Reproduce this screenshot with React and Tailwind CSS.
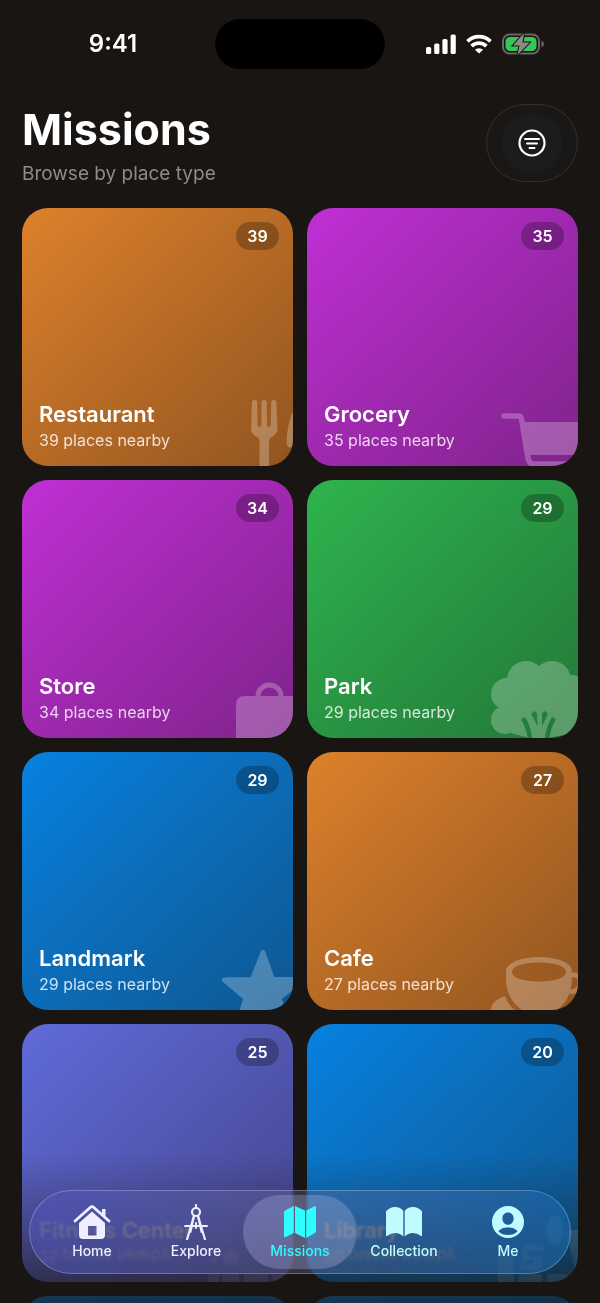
import clsx from 'clsx';

const THEMES = {
  orange: 'from-[#dd812b] to-[#925520]',
  purple: 'from-[#c02fd5] to-[#7f238b]',
  green: 'from-[#2eb44e] to-[#237838]',
  blue: 'from-[#0681e0] to-[#0e5790]',
  indigo: 'from-[#606bda] to-[#43448a]',
};

function ForkKnife() {
  return (
    <g>
      <path d="M51 28.500a2.600 2.600 0 0 1 5.200 0L56.600 51q.2 2 2 2 1.700 0 1.700-2L60.500 28.500a2.600 2.600 0 0 1 5.200 0L66 51q0 2 1.700 2 1.800 0 2-2L70.200 28.500a2.600 2.600 0 0 1 5.200 0L76.500 55q0 3.500-3 6l-3 2q-2.500 1.500-2.500 4V92H58.500V67q0-2.500-2.500-4l-3-2q-3-2.500-3-6z" />
      <path d="M92 37q-6 14-6.500 31 0 5.500 4 5.500H92z" />
    </g>
  );
}

function Cart() {
  return (
    <g>
      <path d="M18 42h14q3 0 3.500 3L42 84q1 6 6 6h44" fill="none" stroke="currentColor" strokeWidth="5.500" strokeLinecap="round" />
      <path d="M37 48h55v33H42z" />
    </g>
  );
}

function Bag() {
  return (
    <g>
      <path d="M57 50a11.500 11 0 0 1 23 0" fill="none" stroke="currentColor" strokeWidth="5" />
      <path d="M35 92V59q0-9 9-9h48v42z" />
    </g>
  );
}

function Tree() {
  return (
    <g>
      <mask id="trunk" maskUnits="userSpaceOnUse" x="0" y="0" width="92" height="92">
        <rect width="92" height="92" fill="#fff" />
        <path d="M37 72q6 10 7 21M68 72q-6 10-7 21" fill="none" stroke="#000" strokeWidth="4.500" />
        <path d="M45 68l3-3 3 2 .5 13zM56 67l3-2 3 3-6 12z" fill="#000" />
      </mask>
      <g mask="url(#trunk)">
        <circle cx="21" cy="48" r="16" />
        <circle cx="19" cy="74" r="14" />
        <circle cx="40" cy="34" r="19" />
        <circle cx="66" cy="34" r="19" />
        <circle cx="86" cy="48" r="19" />
        <circle cx="80" cy="73" r="16" />
        <path d="M20 40l20-15 26 0 24 15v40l-12 9-18 3H44l-16-4-10-4z" />
      </g>
    </g>
  );
}

function Star() {
  return (
    <path
      d="M62 34.500 71.500 61.500H101L78 80l9 26-25-16-25 16 8-26L23.500 62q14-.5 28-.5z"
      stroke="currentColor"
      strokeWidth="5"
      strokeLinejoin="round"
    />
  );
}

function Cup() {
  return (
    <g>
      <path
        fillRule="evenodd"
        d="M20 53c0-8 15-14 33-14s33 6 33 14v5c0 15-4 26-15 34H36C25 84 20 74 20 59zM53 44.500c-16 0-27 4-27 9.500s11 9.500 27 9.500 27-4 27-9.500-11-9.500-27-9.500z"
      />
      <path d="M86 57h3q5 0 5 6v3q0 7-10 8" fill="none" stroke="currentColor" strokeWidth="5" />
      <path d="M5 92q0-9 14-14 3 9 10 14zM92 78q-7 8-14 14h14z" />
    </g>
  );
}

function Equipment() {
  return (
    <g opacity="0.500">
      <circle cx="30" cy="68" r="8" />
      <path d="M7 84h11v8H7zM22 84h16v8H22zM43 84h24v8H43zM71 84h21v8H71z" />
      <circle cx="13" cy="70" r="3" />
    </g>
  );
}

function Books() {
  return (
    <g opacity="0.600">
      <path d="M12 66h16v26H12zM33 84h23v8H33zM61 84h20l2 8H61zM80 40h12v52z" />
      <path d="M36 55h21v6H43v5h13v14H34v-6h14v-4H36z" />
      <ellipse cx="69" cy="40" rx="8" ry="15" />
    </g>
  );
}

const MISSIONS = [
  { name: 'Restaurant', count: 39, theme: 'orange', Icon: ForkKnife },
  { name: 'Grocery', count: 35, theme: 'purple', Icon: Cart },
  { name: 'Store', count: 34, theme: 'purple', Icon: Bag },
  { name: 'Park', count: 29, theme: 'green', Icon: Tree },
  { name: 'Landmark', count: 29, theme: 'blue', Icon: Star },
  { name: 'Cafe', count: 27, theme: 'orange', Icon: Cup },
  { name: 'Fitness Center', count: 25, theme: 'indigo', Icon: Equipment, underBar: true },
  { name: 'Library', count: 20, theme: 'blue', Icon: Books, underBar: true },
];

function StatusBar() {
  return (
    <div className="grid h-[88px] grid-cols-[1fr_170px_1fr] items-center text-white">
      <span className="pl-[11px] text-center text-2xl leading-7 font-semibold">9:41</span>
      <div className="h-[50px] rounded-full bg-black" />
      <div className="flex items-center justify-center gap-[10px] pr-4">
        <svg viewBox="0 0 30 20" className="h-5 w-[30px]" fill="currentColor" aria-hidden="true">
          <rect x="0" y="13" width="5.200" height="7" rx="1.600" />
          <rect x="8.200" y="9.500" width="5.200" height="10.500" rx="1.600" />
          <rect x="16.400" y="5" width="5.200" height="15" rx="1.600" />
          <rect x="24.600" y="0.500" width="5.200" height="19.500" rx="1.600" />
        </svg>
        <svg viewBox="0 0 26 20" className="h-5 w-[26px]" fill="none" stroke="currentColor" strokeWidth="3.800" aria-hidden="true">
          <path d="M1.500 7.300a16.500 16.500 0 0 1 23 0" />
          <path d="M5.600 12.200a10.600 10.600 0 0 1 14.800 0" />
          <path d="M13 19.500 8.900 15.800a6 6 0 0 1 8.200 0z" fill="currentColor" stroke="none" />
        </svg>
        <svg viewBox="0 0 42 22" className="h-[22px] w-[42px]" aria-hidden="true">
          <rect x="1" y="1.500" width="36" height="19" rx="6.500" fill="none" stroke="#6a6765" strokeWidth="2" />
          <path d="M39.500 7.500q2.500 1 2.500 3.500t-2.500 3.500z" fill="#6a6765" />
          <rect x="3.500" y="4" width="31" height="14" rx="4.500" fill="#34c759" />
          <path d="M22 0 11 12.500h6.500L15.500 22 27.500 9.500H20.500z" fill="#8d8a88" stroke="#191512" strokeWidth="2" paintOrder="stroke" />
        </svg>
      </div>
    </div>
  );
}

function Header() {
  return (
    <header className="flex items-start justify-between px-[22px] pt-4 pb-5">
      <div>
        <h1 className="text-[43px] leading-[50px] font-bold text-white">Missions</h1>
        <p className="mt-1.5 text-[19px] leading-7 text-[#8d8a8c]">Browse by place type</p>
      </div>
      <button
        type="button"
        aria-label="Filter missions"
        className="flex h-[78px] w-[92px] items-center justify-center rounded-full border border-[#34302d] bg-[#1a1816]"
      >
        <span className="flex size-[60px] items-center justify-center rounded-full bg-[#1d1c1b]">
          <svg viewBox="0 0 28 28" className="size-7" fill="none" stroke="#fff" strokeLinecap="round">
            <circle cx="14" cy="14" r="12.500" strokeWidth="2.200" />
            <path d="M7 10h14M9 14.500h10M11.500 19h5" strokeWidth="2" />
          </svg>
        </span>
      </button>
    </header>
  );
}

function MissionCard({ name, count, theme, Icon, underBar }) {
  return (
    <a
      href={`#${name}`}
      className={clsx(
        'relative flex h-[258px] flex-col items-end justify-between overflow-hidden rounded-[26px] bg-linear-to-br',
        THEMES[theme]
      )}
    >
      <span className="mt-[14px] mr-[14px] flex h-7 min-w-[43px] items-center justify-center rounded-full bg-black/25 px-[11px] text-base font-semibold text-white">
        {count}
      </span>
      <svg viewBox="0 0 92 92" className="absolute right-0 bottom-0 size-[92px] text-white opacity-25" fill="currentColor" aria-hidden="true">
        <Icon />
      </svg>
      <div className="w-full px-[17px] pb-[14px]">
        <h2 className={clsx('text-[22px] leading-7 font-semibold', underBar ? 'text-[#a39c8f]' : 'text-white')}>{name}</h2>
        <p
          className={clsx(
            'text-base leading-6',
            underBar ? '-scale-y-100 text-[#a39c8f]/80' : 'text-white/80'
          )}
        >
          {count} places nearby
        </p>
      </div>
    </a>
  );
}

function HomeIcon() {
  return (
    <svg viewBox="0 0 38 36" className="h-9 w-[38px]" fill="currentColor">
      <path d="M2 17 17.500 3.200q1.500-1.200 3 0L36 17" fill="none" stroke="currentColor" strokeWidth="2.800" strokeLinecap="round" strokeLinejoin="round" />
      <path d="M29 5h3.500v8L29 10z" />
      <path fillRule="evenodd" d="M6 19 19 7.500 32 19v12q0 4-4 4H10q-4 0-4-4zM15 22v9.500h8.500V22z" />
    </svg>
  );
}

function CompassIcon() {
  return (
    <svg viewBox="0 0 38 36" className="h-9 w-[38px]" fill="none" stroke="currentColor" strokeWidth="2" strokeLinecap="round">
      <circle cx="19" cy="8" r="4" strokeWidth="2.200" />
      <path d="M19 0.800V3M8 22h22M19 19v5" />
      <path d="M17 12 10 35.500M21 12l7 23.500" strokeWidth="2.200" />
      <path d="M17 12 13.500 28M21 12l3.500 16" />
    </svg>
  );
}

function MapIcon() {
  return (
    <svg viewBox="0 0 38 36" className="h-9 w-[38px]" fill="currentColor">
      <path d="M3 8.500q0-1.500 1.500-2.300L12.800 2v27L4.800 33Q3 34 3 32zM14 2l10 4.500V34l-10-5zM25.200 6.500 33.500 2.300Q35 1.600 35 3.500V27q0 1.500-1.500 2.300L25.200 34z" />
    </svg>
  );
}

function BookIcon() {
  return (
    <svg viewBox="0 0 38 36" className="h-9 w-[38px]" fill="currentColor">
      <path d="M1 7.500Q4.500 3 10 3t8.300 4V32.500Q15 29 10 29q-4.500 0-7.200 2.500Q1 33 1 31zM37 7.500Q33.500 3 28 3t-8.300 4V32.500Q23 29 28 29q4.500 0 7.200 2.500Q37 33 37 31z" />
    </svg>
  );
}

function PersonIcon() {
  return (
    <svg viewBox="0 0 38 36" className="h-9 w-[38px]" fill="currentColor">
      <path
        fillRule="evenodd"
        d="M19 2a16 16 0 1 1 0 32 16 16 0 0 1 0-32zM19 8.500c-3.300 0-5.600 2.500-5.600 6s2.300 6.300 5.600 6.300 5.600-2.800 5.600-6.300-2.300-6-5.600-6zM19 23.500c-4.500 0-8.200 1.500-9.500 4Q13 31 19 31t9.500-3.500c-1.300-2.500-5-4-9.500-4z"
      />
    </svg>
  );
}

const TABS = [
  { label: 'Home', Icon: HomeIcon, color: 'text-[#eeeeff]' },
  { label: 'Explore', Icon: CompassIcon, color: 'text-[#eeeeff]' },
  { label: 'Missions', Icon: MapIcon, color: 'text-[#2ffcff]', active: true },
  { label: 'Collection', Icon: BookIcon, color: 'text-[#c0fcff]' },
  { label: 'Me', Icon: PersonIcon, color: 'text-[#c0fcff]' },
];

function TabBar() {
  return (
    <nav className="absolute inset-x-[29px] bottom-[29px] flex h-[84px] rounded-full border border-white/25 bg-linear-to-r from-[#4c50b0]/60 via-[#5b6090]/40 to-[#1765a8]/60 px-[10px] backdrop-blur-[1px] backdrop-brightness-110">
      {TABS.map(({ label, Icon, color, active }) => (
        <button
          key={label}
          type="button"
          aria-current={active ? 'page' : undefined}
          className={clsx('relative flex flex-1 flex-col items-center pt-[13px]', color)}
        >
          {active && <span className="absolute inset-x-[-5px] inset-y-1 rounded-full bg-[#b4b8e6]/30" />}
          <span className="relative" aria-hidden="true">
            <Icon />
          </span>
          <span className="relative mt-[3px] text-sm leading-4 font-medium">{label}</span>
        </button>
      ))}
    </nav>
  );
}

export default function App() {
  return (
    <div className="relative h-screen overflow-hidden bg-[#191512] font-[Inter,sans-serif]">
      <main className="h-full overflow-y-auto [scrollbar-width:none]">
        <StatusBar />
        <Header />
        <div className="grid grid-cols-2 gap-[14px] px-[22px]">
          {MISSIONS.map((mission) => (
            <MissionCard key={mission.name} {...mission} />
          ))}
          {/* next row, not loaded yet */}
          <div className="h-[258px] rounded-[26px] bg-linear-to-br from-[#0681e0] to-[#0e5790]" />
          <div className="h-[258px] rounded-[26px] bg-linear-to-br from-[#0681e0] to-[#0e5790]" />
        </div>
      </main>
      <div className="pointer-events-none absolute inset-x-0 bottom-0 h-[150px] bg-linear-to-b from-transparent via-[#191512]/30 to-[#191512]/70" />
      <TabBar />
    </div>
  );
}
